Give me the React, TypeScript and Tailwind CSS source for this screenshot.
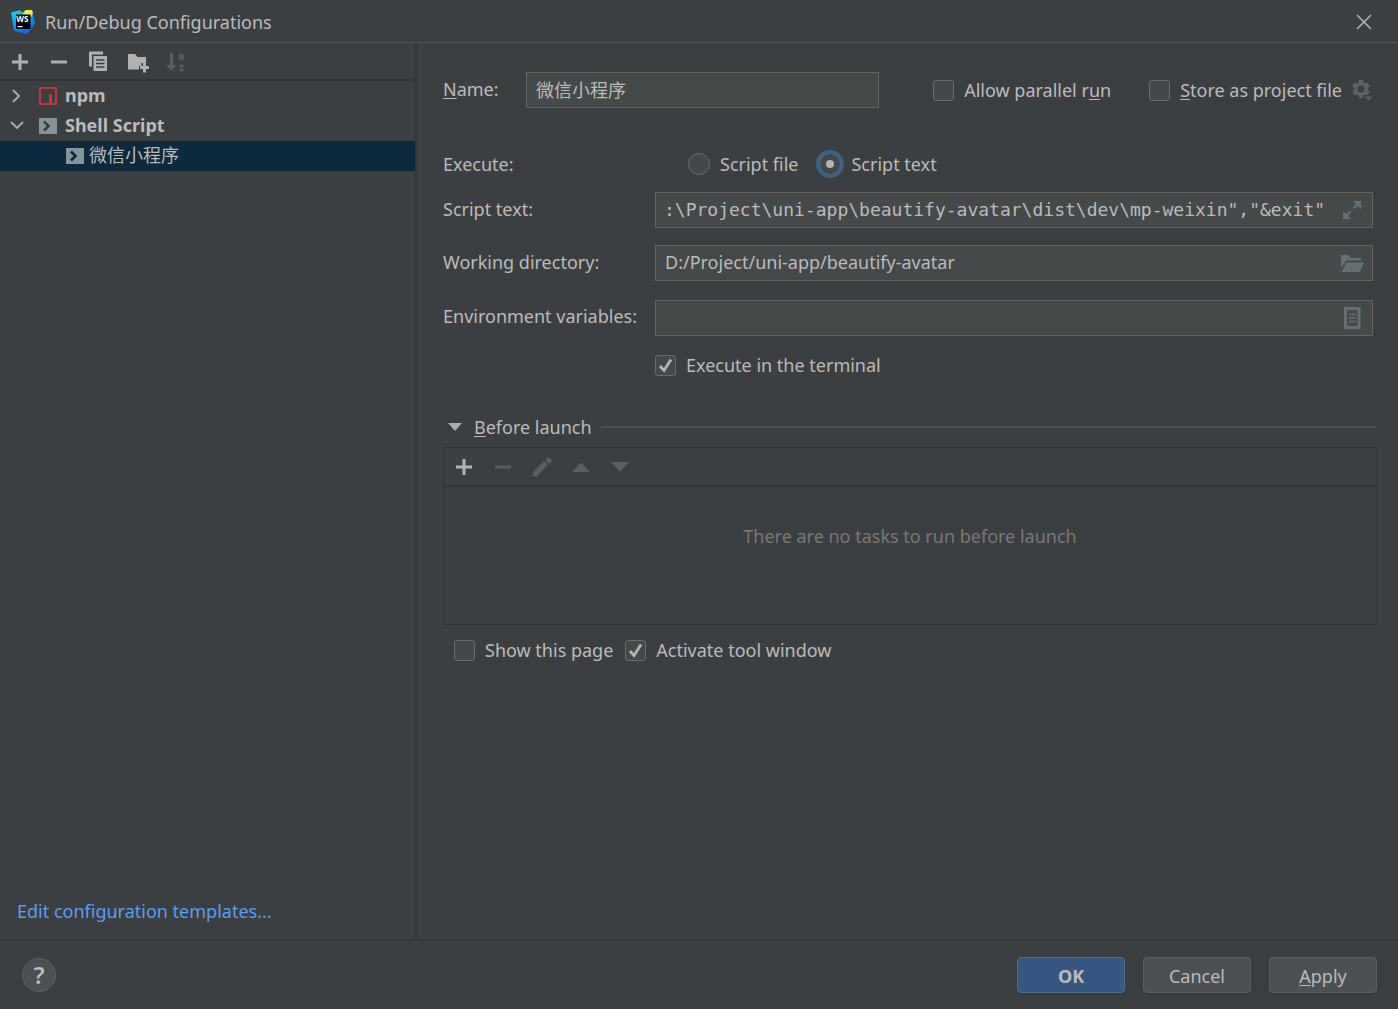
import { useId, useState, type ReactNode } from "react";

const MONO = "font-['DejaVu_Sans_Mono','Noto_Sans_CJK_SC',monospace]";

function Svg({ size = 24, className = "", children }: { size?: number; className?: string; children: ReactNode }) {
  return (
    <svg width={size} height={size} viewBox={`0 0 ${size} ${size}`} className={`shrink-0 ${className}`} aria-hidden="true">
      {children}
    </svg>
  );
}

function PlusIcon() {
  return (
    <Svg>
      <path d="M10.5 4h3v6.5H20v3h-6.5V20h-3v-6.5H4v-3h6.5z" fill="currentColor" />
    </Svg>
  );
}

function MinusIcon() {
  return (
    <Svg>
      <path d="M4 10.5h16v3H4z" fill="currentColor" />
    </Svg>
  );
}

function CopyIcon() {
  return (
    <Svg>
      <path d="M3 1.5h14v3H6v12H3z" fill="currentColor" />
      <path d="M7.5 6H21v15H7.5z" fill="currentColor" />
      <path d="M10 10h8.500M10 13.500h8.500M10 17h8.500" stroke="#3c3f41" strokeWidth="1.500" />
    </Svg>
  );
}

function FolderPlusIcon() {
  return (
    <Svg>
      <path d="M3 4h7l2.500 3H21v6h-4.500v3H14v3.500H3z" fill="currentColor" />
      <path d="M18 12.500h3v3.500h3v3h-3v3.500h-3V19h-3v-3h3z" fill="currentColor" />
    </Svg>
  );
}

function SortIcon() {
  return (
    <Svg>
      <path d="M6 3h3v12h3.500L7.500 20.500 2 15h4z" fill="currentColor" />
      <g fill="currentColor" stroke="currentColor" strokeWidth="0.500" fontFamily="'Liberation Sans', sans-serif" fontWeight="700" fontSize="10">
        <text x="14.500" y="9.500">
          a
        </text>
        <text x="15" y="21">
          z
        </text>
      </g>
    </Svg>
  );
}

function PencilIcon() {
  return (
    <Svg>
      <path d="M3 17.200 14.200 6l3.800 3.800L6.800 21.500H3z" fill="currentColor" />
      <path d="m15.300 4.800 1.900-1.900q1.200-1.200 2.400 0l1.700 1.700q1.200 1.200 0 2.400l-1.900 1.900z" fill="currentColor" />
    </Svg>
  );
}

function UpIcon() {
  return (
    <Svg>
      <path d="M3 17 12 7.500 21 17z" fill="currentColor" />
    </Svg>
  );
}

function DownIcon() {
  return (
    <Svg>
      <path d="M3 7h18l-9 9.500z" fill="currentColor" />
    </Svg>
  );
}

function NpmIcon() {
  return (
    <Svg size={18}>
      <path d="M1 1h16v16H1z" fill="none" stroke="#c93537" strokeWidth="2" />
      <path d="M10 7h3v10h-3z" fill="#c93537" />
    </Svg>
  );
}

function ShellIcon({ dark }: { dark: string }) {
  return (
    <Svg size={18}>
      <path d="M0 1h18v16H0z" fill="#87939a" />
      <path d="m5 4.500 4.500 4.500L5 13.500" fill="none" stroke={dark} strokeWidth="2.600" />
    </Svg>
  );
}

function WebStormLogo() {
  return (
    <svg width="24" height="24" viewBox="0 0 24 24" className="shrink-0" aria-hidden="true">
      <defs>
        <linearGradient id="wsBlue" x1="0" y1="0" x2="0.600" y2="1">
          <stop offset="0" stopColor="#22d0ea" />
          <stop offset="0.550" stopColor="#0a9bf2" />
          <stop offset="1" stopColor="#0b63f6" />
        </linearGradient>
        <linearGradient id="wsLime" x1="0" y1="0" x2="1" y2="0">
          <stop offset="0" stopColor="#5fe08c" />
          <stop offset="0.400" stopColor="#f3f04e" />
          <stop offset="1" stopColor="#d9ee55" />
        </linearGradient>
      </defs>
      <path d="M0 2.500 9 0l3 3 3-2 7 3 2 9-3.500 6-2.500 3-2 2-10-2.500L3 20z" fill="url(#wsBlue)" />
      <path d="M10 5 14.500 0H21l1 3-2 4z" fill="url(#wsLime)" />
      <path d="M5 4.500h14.500V19H5z" fill="#000" />
      <text x="5.200" y="11.500" fontSize="8" fontWeight="700" fill="#fff" fontFamily="'Noto Sans', sans-serif">
        WS
      </text>
      <path d="M6.500 16h5v1.200h-5z" fill="#fff" />
    </svg>
  );
}

function IconButton({ label, disabled, children }: { label: string; disabled?: boolean; children: ReactNode }) {
  return (
    <button type="button" aria-label={label} disabled={disabled} className="text-[#afb1b3] disabled:text-[#5b5d5e]">
      {children}
    </button>
  );
}

function Mnemonic({ children }: { children: string }) {
  return <u className="underline-offset-2">{children}</u>;
}

function Check({ label, initial = false }: { label: ReactNode; initial?: boolean }) {
  const [on, setOn] = useState(initial);
  const id = useId();
  return (
    <div className="flex items-center gap-2.5">
      <span className="relative flex">
        <input
          id={id}
          type="checkbox"
          checked={on}
          onChange={(e) => setOn(e.target.checked)}
          className="peer size-[21px] appearance-none rounded-[3px] border border-[#6b6b6b] bg-[#43494a]"
        />
        <svg viewBox="0 0 21 21" className="pointer-events-none absolute inset-0 hidden size-full peer-checked:block" aria-hidden="true">
          <path d="m5 11 4 4.500L16 4.500" fill="none" stroke="#b4b4b4" strokeWidth="2.800" />
        </svg>
      </span>
      <label htmlFor={id}>{label}</label>
    </div>
  );
}

function Radio({ label, checked, onSelect }: { label: string; checked: boolean; onSelect: () => void }) {
  const id = useId();
  return (
    <div className="flex items-center gap-2.5">
      <span className="relative flex items-center justify-center">
        <input
          id={id}
          type="radio"
          name="execute"
          checked={checked}
          onChange={onSelect}
          className="peer size-[22px] appearance-none rounded-full border border-[#6b6b6b] bg-[#43494a] checked:border-[#466d94] checked:ring-3 checked:ring-[#3d6185]"
        />
        <span className="pointer-events-none absolute hidden size-2 rounded-full bg-[#b4b4b4] peer-checked:block" />
      </span>
      <label htmlFor={id}>{label}</label>
    </div>
  );
}

function PathField({
  id,
  value,
  action,
  mono = false,
  icon,
}: {
  id: string;
  value: string;
  action: string;
  mono?: boolean;
  icon: ReactNode;
}) {
  return (
    <div className="flex h-9 items-center border border-[#646464] bg-[#45494a] pr-2">
      <input
        id={id}
        defaultValue={value}
        className={`h-full min-w-0 flex-1 bg-transparent pb-0.5 outline-none ${mono ? `pl-2 ${MONO}` : "pl-[9px]"}`}
      />
      <button type="button" aria-label={action} className="text-[#656e73]">
        {icon}
      </button>
    </div>
  );
}

export default function App() {
  const [mode, setMode] = useState("text");
  return (
    <div className="flex min-h-screen flex-col bg-[#3c3f41] font-['Noto_Sans','Noto_Sans_CJK_SC',sans-serif] text-lg leading-6 text-[#bbbbbb]">
      <header className="flex h-[43px] items-center gap-2.5 border-b border-[#515456] pt-0.5 pr-[26px] pl-[11px]">
        <WebStormLogo />
        <h1 className="flex-1">Run/Debug Configurations</h1>
        <button type="button" aria-label="Close">
          <Svg size={16}>
            <path d="m1 1 14 14M15 1 1 15" stroke="#b4b6b7" strokeWidth="1.500" />
          </Svg>
        </button>
      </header>

      <div className="flex flex-1">
        <aside className="flex w-[417px] shrink-0 flex-col border-r-2 border-[#323435]">
          <div className="flex h-[38px] items-center gap-[15px] border-b-2 border-[#323435] pt-0.5 pl-2">
            <IconButton label="Add new configuration">
              <PlusIcon />
            </IconButton>
            <IconButton label="Remove configuration">
              <MinusIcon />
            </IconButton>
            <IconButton label="Copy configuration">
              <CopyIcon />
            </IconButton>
            <IconButton label="Create new folder">
              <FolderPlusIcon />
            </IconButton>
            <IconButton label="Sort configurations" disabled>
              <SortIcon />
            </IconButton>
          </div>

          <ul className="flex-1">
            <li>
              <button type="button" className="flex h-[30px] w-full items-center pl-2.5 font-bold">
                <Svg size={14} className="mr-[15px]">
                  <path d="m3 1 6 6-6 6" fill="none" stroke="#adadad" strokeWidth="1.800" />
                </Svg>
                <NpmIcon />
                <span className="pb-0.5 pl-2">npm</span>
              </button>
            </li>
            <li>
              <button type="button" className="flex h-[30px] w-full items-center pl-2.5 font-bold">
                <Svg size={14} className="mr-[15px]">
                  <path d="m1 3 6 6 6-6" fill="none" stroke="#adadad" strokeWidth="1.800" />
                </Svg>
                <ShellIcon dark="#3c3f41" />
                <span className="pb-0.5 pl-2">Shell Script</span>
              </button>
              <ul>
                <li>
                  <button type="button" className="flex h-[30px] w-full items-center bg-[#0d293e] pl-[66px]">
                    <ShellIcon dark="#0d293e" />
                    <span className="pb-0.5 pl-[5px]">微信小程序</span>
                  </button>
                </li>
              </ul>
            </li>
          </ul>

          <a href="#templates" className="mb-4 self-start pl-[17px] text-[#589df6]">
            Edit configuration templates...
          </a>
        </aside>

        <main className="min-w-0 flex-1 pt-[29px] pr-[21px] pl-[26px]">
          <div className="flex h-9 items-center pr-1">
            <label htmlFor="name" className="w-[83px] shrink-0 pb-0.5">
              <Mnemonic>N</Mnemonic>ame:
            </label>
            <input
              id="name"
              defaultValue="微信小程序"
              className="h-9 w-[353px] min-w-0 border border-[#646464] bg-[#45494a] px-[9px] pb-0.5 outline-none"
            />
            <div className="ml-auto flex shrink-0 items-center gap-[38px] pl-4">
              <Check
                label={
                  <>
                    Allow parallel r<Mnemonic>u</Mnemonic>n
                  </>
                }
              />
              <div className="flex items-center gap-[9px]">
                <Check
                  label={
                    <>
                      <Mnemonic>S</Mnemonic>tore as project file
                    </>
                  }
                />
                <button type="button" aria-label="Project file options" className="text-[#5f6162]">
                  <Svg size={22}>
                    <path
                      fillRule="evenodd"
                      fill="currentColor"
                      d="M8 1h4l.6 2.600 1.500.9 2.600-.8 2 3.400-2 1.900v1.900l2 1.900-2 3.400-2.600-.8-1.500.9L12 19H8l-.6-2.700-1.500-.9-2.600.8-2-3.400 2-1.900V9l-2-1.900 2-3.400 2.600.8 1.500-.9zM10 6.500a3.500 3.500 0 1 0 0 7 3.500 3.500 0 0 0 0-7z"
                    />
                    <path d="M11.500 16h10.500v1l-4.500 5-6-5z" fill="#3c3f41" />
                    <path d="M13.500 17.500h8l-4 4z" fill="currentColor" />
                  </Svg>
                </button>
              </div>
            </div>
          </div>

          <div className="mt-9 grid grid-cols-[212px_1fr] items-center pr-1">
            <span id="execute-label" className="h-10 leading-10">
              Execute:
            </span>
            <div role="radiogroup" aria-labelledby="execute-label" className="flex h-10 items-center gap-[21px] pl-[33px]">
              <Radio label="Script file" checked={mode === "file"} onSelect={() => setMode("file")} />
              <Radio label="Script text" checked={mode === "text"} onSelect={() => setMode("text")} />
            </div>

            <label htmlFor="script" className="mt-2 pb-0.5">
              Script text:
            </label>
            <div className="mt-2">
              <PathField
                id="script"
                mono
                value={':\\Project\\uni-app\\beautify-avatar\\dist\\dev\\mp-weixin","&exit"'}
                action="Expand"
                icon={
                  <Svg>
                    <path d="M13 3h8v8zM3 13v8h8z" fill="currentColor" />
                    <path d="m18 6-4.500 4.500M6 18l4.500-4.500" stroke="currentColor" strokeWidth="2.400" />
                  </Svg>
                }
              />
            </div>

            <label htmlFor="cwd" className="mt-[17px] pb-0.5">
              Working directory:
            </label>
            <div className="mt-[17px]">
              <PathField
                id="cwd"
                value="D:/Project/uni-app/beautify-avatar"
                action="Browse"
                icon={
                  <Svg>
                    <path d="M1 17V4h7.500l2 3H21v2.500H6.500z" fill="currentColor" />
                    <path d="M6.500 11.500H24L20 21H1.500z" fill="currentColor" />
                  </Svg>
                }
              />
            </div>

            <label htmlFor="env" className="mt-[19px] pb-1">
              Environment variables:
            </label>
            <div className="mt-[19px]">
              <PathField
                id="env"
                value=""
                action="Edit environment variables"
                icon={
                  <Svg>
                    <path d="M5.500 2.500h13.500v19H5.500z" fill="none" stroke="currentColor" strokeWidth="3" />
                    <path d="M9 8.500h7M9 12h7M9 15.500h7" stroke="currentColor" strokeWidth="1.500" />
                  </Svg>
                }
              />
            </div>

            <div className="col-start-2 mt-[17px]">
              <Check initial label="Execute in the terminal" />
            </div>
          </div>

          <section>
            <h2 className="mt-[38px] flex items-center">
              <button type="button" className="flex items-center gap-3 pl-[5px]">
                <Svg size={14}>
                  <path d="M0 3h14l-7 8z" fill="#adadad" />
                </Svg>
                <span>
                  <Mnemonic>B</Mnemonic>efore launch
                </span>
              </button>
              <span className="ml-[9px] h-0.5 flex-1 bg-[#4f5152]" />
            </h2>

            <div className="mt-2 flex h-[178px] flex-col border border-[#323435]">
              <div className="flex h-[39px] items-center gap-[15px] border-b-2 border-[#323435] pl-2">
                <IconButton label="Add task">
                  <PlusIcon />
                </IconButton>
                <IconButton label="Remove task" disabled>
                  <MinusIcon />
                </IconButton>
                <IconButton label="Edit task" disabled>
                  <PencilIcon />
                </IconButton>
                <IconButton label="Move up" disabled>
                  <UpIcon />
                </IconButton>
                <IconButton label="Move down" disabled>
                  <DownIcon />
                </IconButton>
              </div>
              <p className="pt-[37px] text-center text-[#787878]">There are no tasks to run before launch</p>
            </div>

            <div className="mt-[13px] flex items-center gap-3 pl-[11px]">
              <Check label="Show this page" />
              <Check initial label="Activate tool window" />
            </div>
          </section>
        </main>
      </div>

      <footer className="flex h-[70px] items-center gap-[18px] border-t border-[#323435] pr-[21px] pl-[22px]">
        <button
          type="button"
          aria-label="Help"
          className="mr-auto size-[34px] rounded-full border border-[#5e6060] bg-[#4c5052] text-2xl leading-8 font-semibold"
        >
          ?
        </button>
        <button type="button" className="h-9 w-[108px] rounded border border-[#4c708c] bg-[#365880] pt-0.5 font-bold shadow-sm">
          OK
        </button>
        <button type="button" className="h-9 w-[108px] rounded border border-[#5e6060] bg-[#4c5052] pt-0.5 shadow-sm">
          Cancel
        </button>
        <button type="button" className="h-9 w-[108px] rounded border border-[#5e6060] bg-[#4c5052] pt-0.5 shadow-sm">
          <Mnemonic>A</Mnemonic>pply
        </button>
      </footer>
    </div>
  );
}
